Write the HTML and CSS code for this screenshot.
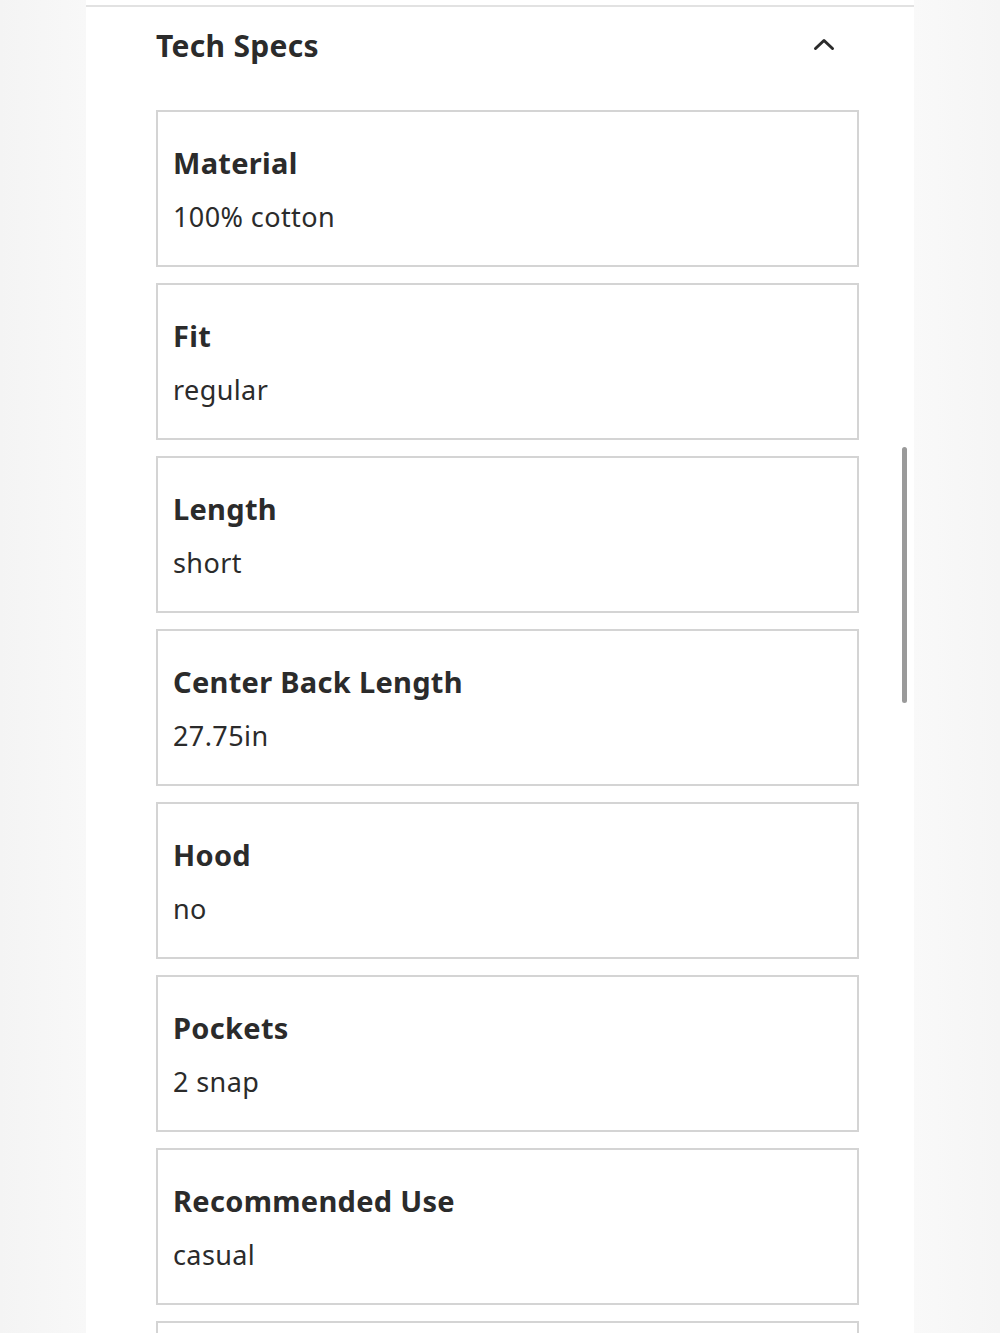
FILE: index.html
```html
<!DOCTYPE html>
<html lang="en">
<head>
<meta charset="utf-8">
<title>Tech Specs</title>
<link rel="stylesheet" href="styles.css">
</head>
<body>
<main class="panel">
  <div class="divider"></div>
  <div class="section-head">
    <h2 class="section-title">Tech Specs</h2>
    <svg class="chevron" width="22" height="14" viewBox="0 0 22 14" aria-hidden="true">
      <path d="M2.5 11.5 L11 3.5 L19.5 11.5" fill="none" stroke="#2b2b2b" stroke-width="3" stroke-linecap="round" stroke-linejoin="round"/>
    </svg>
  </div>
  <div class="specs">
    <div class="spec"><div class="spec-name">Material</div><div class="spec-value">100% cotton</div></div>
    <div class="spec"><div class="spec-name">Fit</div><div class="spec-value">regular</div></div>
    <div class="spec"><div class="spec-name">Length</div><div class="spec-value">short</div></div>
    <div class="spec"><div class="spec-name">Center Back Length</div><div class="spec-value">27.75in</div></div>
    <div class="spec"><div class="spec-name">Hood</div><div class="spec-value">no</div></div>
    <div class="spec"><div class="spec-name">Pockets</div><div class="spec-value">2 snap</div></div>
    <div class="spec"><div class="spec-name">Recommended Use</div><div class="spec-value">casual</div></div>
    <div class="spec spec-partial"></div>
  </div>
  <div class="scrollbar"></div>
</main>
</body>
</html>
```

FILE: styles.css
```css
html, body {
  margin: 0;
  padding: 0;
  height: 100%;
  overflow: hidden;
}
body {
  background: linear-gradient(90deg, #f4f4f4 0%, #f8f8f8 8.6%, #f9f9f9 91.4%, #f5f5f5 100%);
  font-family: "Noto Sans", "Liberation Sans", sans-serif;
  color: #2b2b2b;
}
.panel {
  position: relative;
  margin: 0 86px;
  background: #ffffff;
  padding-top: 5px;
  min-height: 100%;
}
.divider {
  height: 2px;
  background: #e2e2e2;
}
.section-head {
  display: flex;
  align-items: center;
  justify-content: space-between;
  padding: 0 79px 0 70px;
  height: 80px;
}
.section-title {
  margin: 0;
  font-size: 30px;
  font-weight: 700;
  letter-spacing: 0.3px;
  line-height: 36px;
  padding-bottom: 2px;
}
.chevron {
  display: block;
  margin-bottom: 6px;
}
.specs {
  display: flex;
  flex-direction: column;
  gap: 16px;
  padding: 23px 55px 0 70px;
}
.spec {
  box-sizing: border-box;
  height: 157px;
  flex: 0 0 157px;
  border: 2px solid #d4d4d4;
  padding: 33px 15px 0 15px;
  display: flex;
  flex-direction: column;
  gap: 18px;
}
.spec-name {
  font-size: 29px;
  font-weight: 700;
  line-height: 36px;
  letter-spacing: 0.3px;
}
.spec-value {
  font-size: 27px;
  font-weight: 400;
  line-height: 36px;
  letter-spacing: 0.4px;
}
.scrollbar {
  position: absolute;
  left: 816px;
  top: 447px;
  width: 5px;
  height: 256px;
  border-radius: 3px;
  background: #9a9a9a;
}
```
